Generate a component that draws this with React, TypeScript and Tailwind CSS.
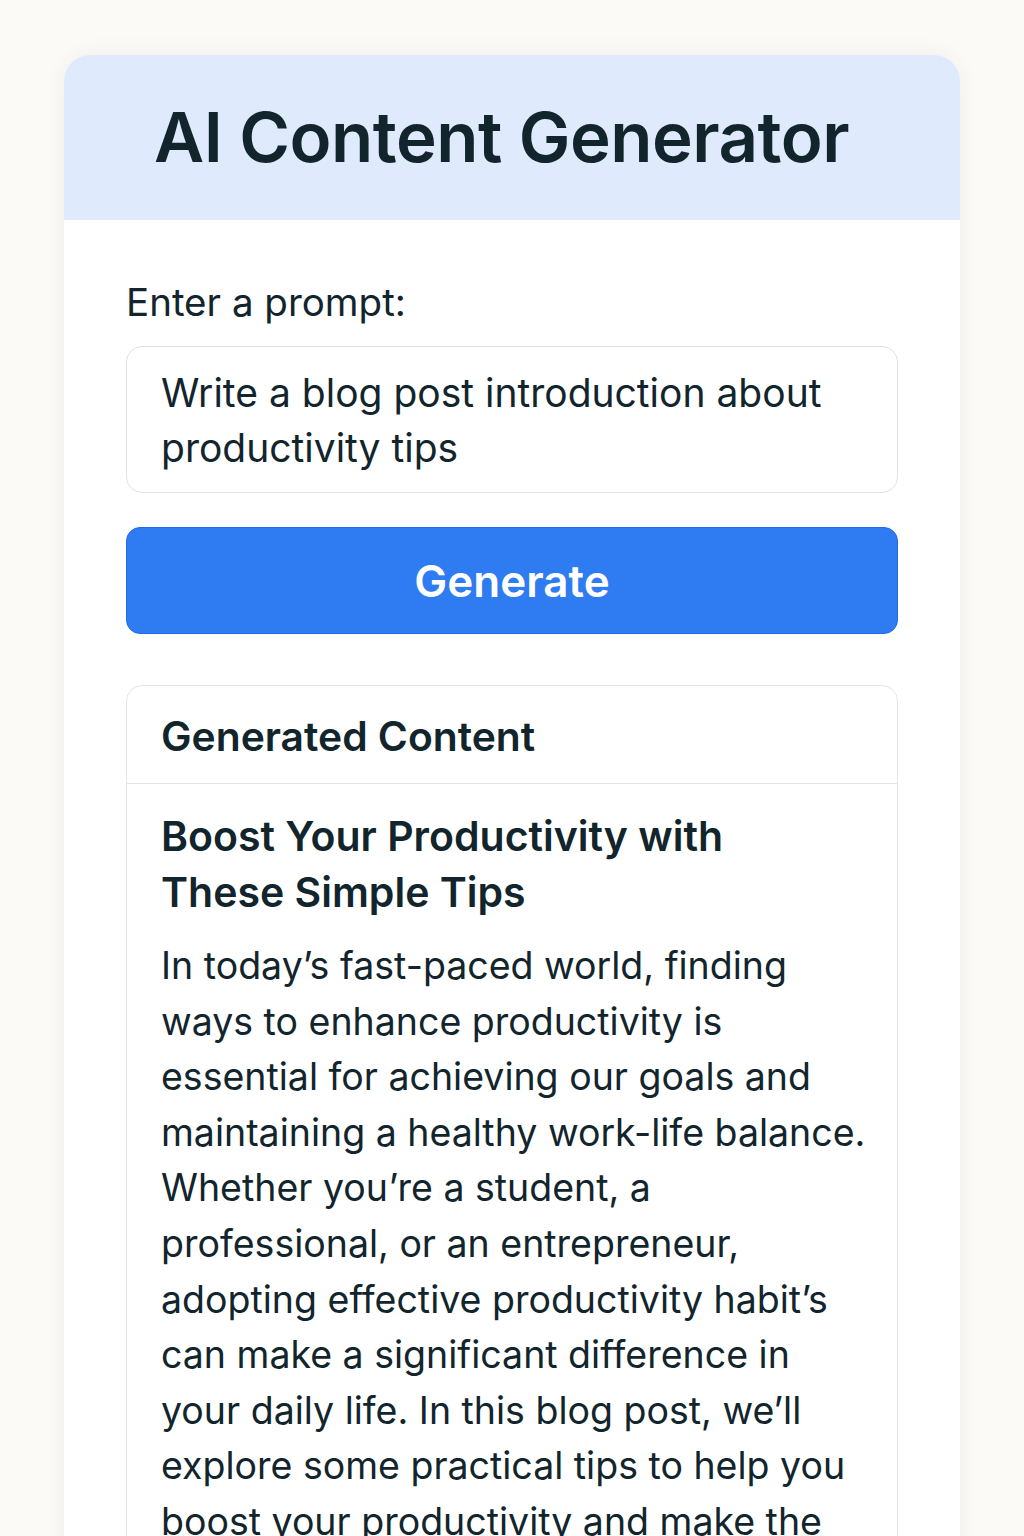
export default function App() {
  return (
    <div
      className="min-h-[1536px] bg-[#fbfaf6] px-16 pt-[55px] text-[#12252d]"
      style={{ fontFamily: "Inter, 'Noto Sans', sans-serif" }}
    >
      <div className="overflow-hidden rounded-t-[26px] bg-white shadow-[0_0_24px_rgba(0,0,0,0.05)]">
        {/* Header */}
        <div className="flex h-[165px] items-center bg-[#dfeafd] pl-[90px]">
          <h1 className="text-[69px] font-semibold leading-none tracking-[-0.5px]">
            AI Content Generator
          </h1>
        </div>

        {/* Body */}
        <div className="px-[62px] pb-10 pt-[59px]">
          <label className="block text-[38.5px] leading-[46px]">Enter a prompt:</label>

          <div className="mt-[21px] h-[147px] rounded-2xl border border-[#e2e2e2] px-[34px] py-[18px] text-[39px] leading-[55px]">
            Write a blog post introduction about productivity tips
          </div>

          <button className="mt-[34px] flex h-[107px] w-full items-center justify-center rounded-[14px] border border-[#1f6bf0] bg-[#2f7bf1] text-[44px] font-semibold text-white">
            Generate
          </button>

          <div className="mt-[51px] rounded-2xl border border-[#e5e5e5]">
            <div className="border-b border-[#e5e5e5] px-[34px] pb-[20px] pt-[23px] text-[40.8px] font-semibold leading-[54px]">
              Generated Content
            </div>
            <div className="pl-[34px] pr-6 pt-[24px]">
              <h2 className="text-[41px] font-semibold leading-[56px]">
                Boost Your Productivity with
                <br />
                These Simple Tips
              </h2>
              <p className="mt-[18px] text-[37.5px] leading-[55.6px]">
                In today’s fast-paced world, finding ways to enhance productivity is essential for achieving our goals and
                maintaining a healthy work-life balance. Whether you’re a student, a professional, or an entrepreneur,
                adopting effective productivity habit’s can make a significant difference in your daily life. In this blog
                post, we’ll explore some practical tips to help you boost your productivity and make the most of your time.
              </p>
            </div>
          </div>
        </div>
      </div>
    </div>
  );
}
